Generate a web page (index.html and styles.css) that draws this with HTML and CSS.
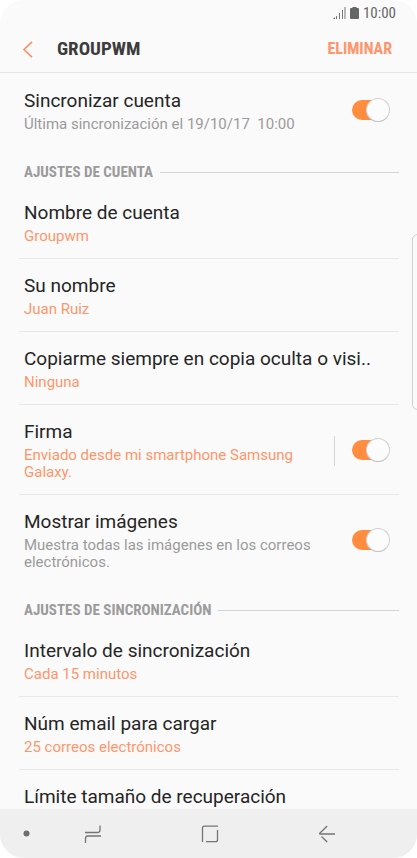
FILE: index.html
```html
<!DOCTYPE html>
<html lang="es">
<head>
<meta charset="utf-8">
<meta name="viewport" content="width=device-width, initial-scale=1">
<title>Groupwm</title>
<link rel="stylesheet" href="styles.css">
</head>
<body>
<div class="screen">
  <div class="status">
    <svg width="13" height="12" viewBox="0 0 13 12" aria-hidden="true" fill="#777"><path d="M0 12l2-2v2zM3 9h1v3H3zM6 6h1v6H6zM9 3h1v9H9zM11.500 0h1v12h-1z"/></svg>
    <svg class="battery" width="9" height="12" viewBox="0 0 9 12" aria-hidden="true" fill="#666"><path d="M2.500 0h4v1H8q1 0 1 1v9q0 1-1 1H1q-1 0-1-1V2q0-1 1-1h1.500z"/></svg>
    <span>10:00</span>
  </div>
  <header class="bar">
    <button class="back" type="button" aria-label="Atrás">
      <svg width="11" height="17" viewBox="0 0 11 17" fill="none" stroke="#ff8f61" stroke-width="1.600"><path d="M10 .8L2 8.500l8 7.700"/></svg>
    </button>
    <h1 class="heading">GROUPWM</h1>
    <button class="delete" type="button">ELIMINAR</button>
  </header>
  <main class="content">
    <div class="row last">
      <div class="text">
        <label class="title" for="sync">Sincronizar cuenta</label>
        <p class="sub pre">Última sincronización el 19/10/17  10:00</p>
      </div>
      <input class="switch" id="sync" type="checkbox" checked>
    </div>
    <h2 class="section">AJUSTES DE CUENTA</h2>
    <div class="row">
      <div class="text">
        <p class="title">Nombre de cuenta</p>
        <p class="sub value">Groupwm</p>
      </div>
    </div>
    <div class="row">
      <div class="text">
        <p class="title">Su nombre</p>
        <p class="sub value">Juan Ruiz</p>
      </div>
    </div>
    <div class="row">
      <div class="text">
        <p class="title">Copiarme siempre en copia oculta o visi..</p>
        <p class="sub value">Ninguna</p>
      </div>
    </div>
    <div class="row">
      <div class="text">
        <label class="title" for="signature">Firma</label>
        <p class="sub value">Enviado desde mi smartphone Samsung Galaxy.</p>
      </div>
      <span class="split"></span>
      <input class="switch" id="signature" type="checkbox" checked>
    </div>
    <div class="row last">
      <div class="text">
        <label class="title" for="images">Mostrar imágenes</label>
        <p class="sub">Muestra todas las imágenes en los correos electrónicos.</p>
      </div>
      <input class="switch" id="images" type="checkbox" checked>
    </div>
    <h2 class="section">AJUSTES DE SINCRONIZACIÓN</h2>
    <div class="row">
      <div class="text">
        <p class="title">Intervalo de sincronización</p>
        <p class="sub value">Cada 15 minutos</p>
      </div>
    </div>
    <div class="row">
      <div class="text">
        <p class="title">Núm email para cargar</p>
        <p class="sub value">25 correos electrónicos</p>
      </div>
    </div>
    <div class="row last">
      <div class="text">
        <p class="title">Límite tamaño de recuperación</p>
      </div>
    </div>
  </main>
  <nav class="nav">
    <button class="dot" type="button" aria-label="Fijar barra"><svg width="7" height="7" viewBox="0 0 7 7"><circle cx="3.500" cy="3.500" r="3" fill="#6e6e6e"/></svg></button>
    <button type="button" aria-label="Recientes"><svg width="18" height="18" viewBox="0 0 18 18" fill="none" stroke="#757575" stroke-width="1.300"><path d="M1 7.500h12.500q2.500 0 2.500-2.500V.5M17 11H3.500Q1.500 11 1.500 13.500V18"/></svg></button>
    <button type="button" aria-label="Inicio"><svg width="18" height="18" viewBox="0 0 18 18" fill="none" stroke="#757575" stroke-width="1.300"><path d="M1.500 17V3q0-1.800 1.800-1.800H17M16.500 5v9.800q0 1.900-1.900 1.900H5"/></svg></button>
    <button type="button" aria-label="Atrás"><svg width="18" height="18" viewBox="0 0 18 18" fill="none" stroke="#757575" stroke-width="1.300"><path d="M9.200 1L2 8q-1 1 .3 1H17M3.500 11.500L9.200 17"/></svg></button>
  </nav>
  <div class="edge"></div>
</div>
</body>
</html>
```
FILE: styles.css
```css
* { box-sizing: border-box; margin: 0; padding: 0; }
body { background: #fff; font-family: Roboto, "Liberation Sans", sans-serif; color: #252525; }
button { background: none; border: 0; font: inherit; color: inherit; display: flex; align-items: center; }
svg { display: block; }

.screen {
  position: relative;
  display: flex;
  flex-direction: column;
  height: 100vh;
  background: #fafafa;
  border-radius: 24px;
  overflow: hidden;
}

.status {
  flex: none;
  display: flex;
  justify-content: flex-end;
  align-items: center;
  height: 26px;
  padding-right: 21px;
  gap: 4px;
  font-family: "Roboto Condensed", Roboto, sans-serif;
  font-size: 15px;
  line-height: 18px;
  color: #666;
}

.bar {
  flex: none;
  display: flex;
  align-items: center;
  height: 47px;
  padding: 0 25px 0 22px;
  border-bottom: 1px solid #e4e4e4;
  font-family: "Roboto Condensed", Roboto, sans-serif;
}
.back { width: 35px; height: 40px; }
.heading { flex: 1; font-size: 19px; line-height: 24px; font-weight: 700; color: #3c3c3c; }
.delete { font-size: 16px; line-height: 24px; font-weight: 700; color: #ff966b; }

.content { flex: 1; min-height: 0; overflow: hidden; padding: 1px 18px 0 19px; }

.row {
  display: flex;
  align-items: center;
  padding: 15px 9px 13px 5px;
  border-bottom: 1px solid #e8e8e8;
}
.last { border-bottom: 0; }
.text { flex: 1; min-width: 0; }
.title { display: block; margin-bottom: 3px; font-size: 19px; line-height: 24px; white-space: nowrap; }
.sub { max-width: 290px; font-size: 15px; line-height: 17px; color: #9b9b9b; }
.pre { white-space: pre; }
.value { color: #ff966b; }

.split { width: 1px; height: 30px; margin-right: 17px; background: #d4d4d4; }

.switch {
  flex: none;
  appearance: none;
  display: flex;
  justify-content: flex-end;
  align-items: center;
  width: 38px;
  height: 20px;
  margin-bottom: 2px;
  background: linear-gradient(#ff8c3f, #ff8c3f) left center / 28px 20px no-repeat;
  border-radius: 10px;
}
.switch::before {
  content: "";
  flex: none;
  width: 22px;
  height: 22px;
  border: 1px solid #d0d0d0;
  border-bottom-color: #bdbdbd;
  border-radius: 50%;
  background: #fcfcfc;
}

.section {
  display: flex;
  align-items: center;
  gap: 7px;
  padding: 16px 0 4px 5px;
  font-family: "Roboto Condensed", Roboto, sans-serif;
  font-size: 15px;
  line-height: 20px;
  font-weight: 700;
  color: #9b9b9b;
}
.section::after { content: ""; flex: 1; height: 1px; background: #d4d4d4; }

.nav {
  flex: none;
  display: grid;
  grid-template-columns: 35px 1fr 1fr 1fr 32px;
  height: 49px;
  background: #efefef;
}
.nav button { justify-content: center; }
.nav .dot { padding-left: 17px; }

.edge {
  position: absolute;
  top: 234px;
  right: -6px;
  width: 11px;
  height: 176px;
  border: 1px solid #cfcfcf;
  border-radius: 6px;
}
```
